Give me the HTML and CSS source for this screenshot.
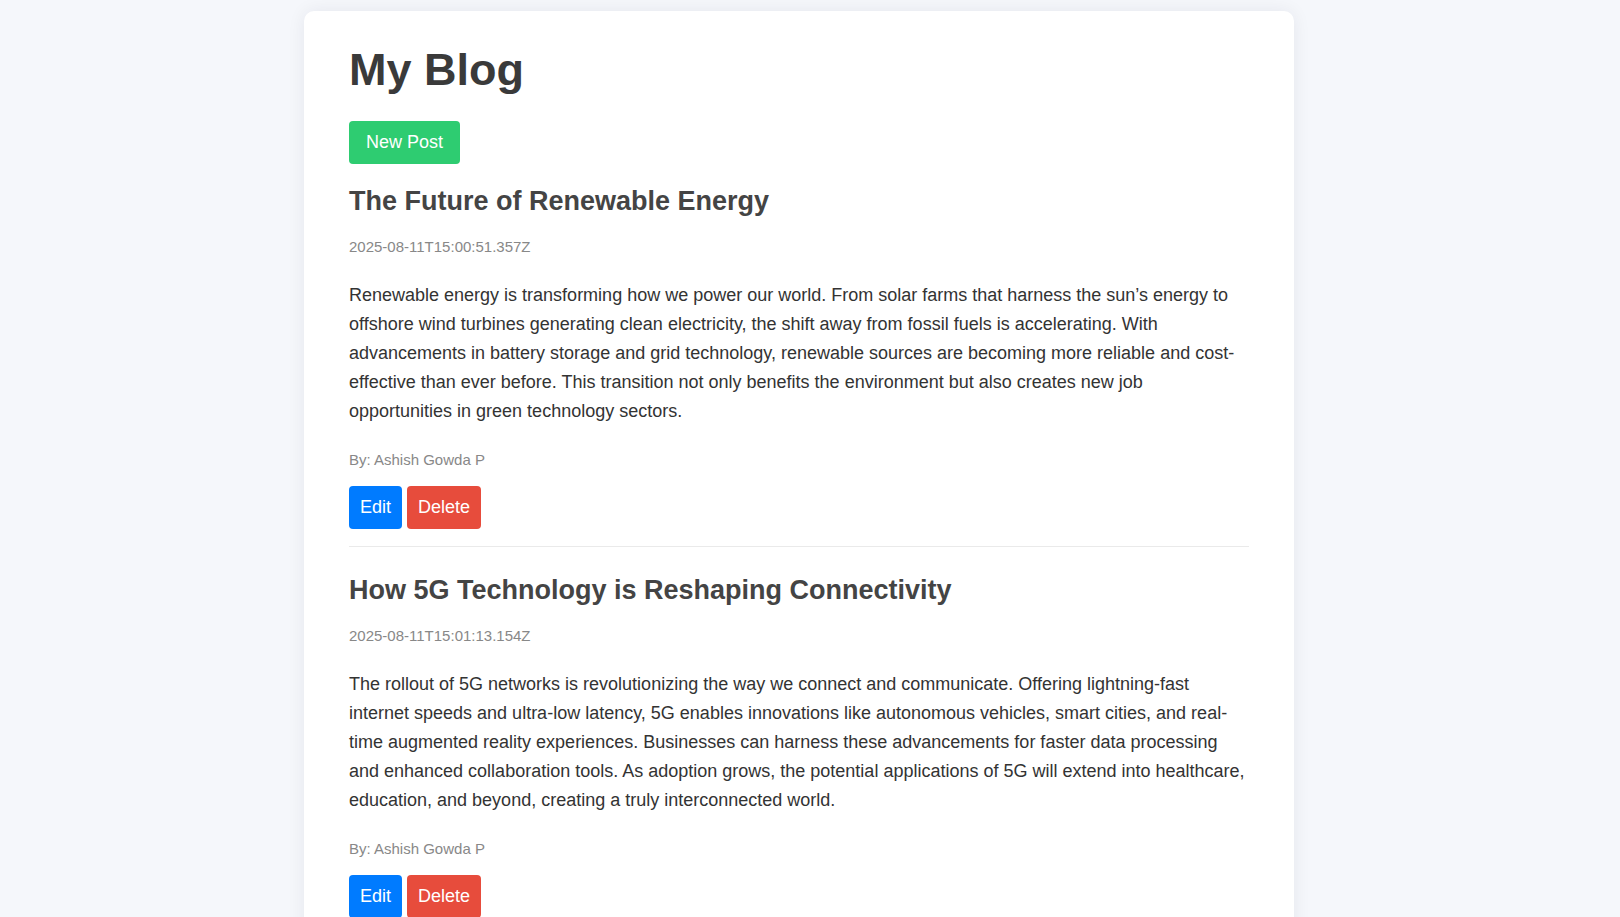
FILE: index.html
```html
<!DOCTYPE html>
<html lang="en">
<head>
<meta charset="utf-8">
<title>My Blog</title>
<link rel="stylesheet" href="styles.css">
</head>
<body>
<main class="container">
  <h1 class="page-title">My Blog</h1>
  <div class="toolbar">
    <button class="btn btn-new">New Post</button>
  </div>

  <article class="post">
    <h2 class="post-title">The Future of Renewable Energy</h2>
    <p class="post-date">2025-08-11T15:00:51.357Z</p>
    <p class="post-content">Renewable energy is transforming how we power our world. From solar farms that harness the sun’s energy to offshore wind turbines generating clean electricity, the shift away from fossil fuels is accelerating. With advancements in battery storage and grid technology, renewable sources are becoming more reliable and cost-effective than ever before. This transition not only benefits the environment but also creates new job opportunities in green technology sectors.</p>
    <p class="post-author">By: Ashish Gowda P</p>
    <div class="post-actions">
      <button class="btn btn-edit">Edit</button>
      <button class="btn btn-delete">Delete</button>
    </div>
  </article>

  <article class="post">
    <h2 class="post-title">How 5G Technology is Reshaping Connectivity</h2>
    <p class="post-date">2025-08-11T15:01:13.154Z</p>
    <p class="post-content">The rollout of 5G networks is revolutionizing the way we connect and communicate. Offering lightning-fast internet speeds and ultra-low latency, 5G enables innovations like autonomous vehicles, smart cities, and real-time augmented reality experiences. Businesses can harness these advancements for faster data processing and enhanced collaboration tools. As adoption grows, the potential applications of 5G will extend into healthcare, education, and beyond, creating a truly interconnected world.</p>
    <p class="post-author">By: Ashish Gowda P</p>
    <div class="post-actions">
      <button class="btn btn-edit">Edit</button>
      <button class="btn btn-delete">Delete</button>
    </div>
  </article>
</main>
</body>
</html>
```

FILE: styles.css
```css
html, body {
  margin: 0;
  padding: 0;
}

body {
  background: #f5f7fb;
  font-family: "Liberation Sans", Arial, sans-serif;
  color: #333;
  padding: 11px 22px 40px 0;
}

.container {
  width: 900px;
  margin: 0 auto;
  background: #ffffff;
  border-radius: 10px;
  box-shadow: 0 0 18px rgba(20, 30, 60, 0.07);
  padding: 33px 45px 30px;
}

.page-title {
  font-size: 45px;
  font-weight: bold;
  color: #3a3a3a;
  margin: 0 0 25px;
  line-height: normal;
}

.toolbar {
  margin-bottom: 22px;
}

.btn {
  font-family: "Liberation Sans", Arial, sans-serif;
  font-size: 18px;
  line-height: 21px;
  color: #ffffff;
  border: none;
  border-radius: 4px;
  padding: 11px 11px;
  cursor: pointer;
  vertical-align: top;
}

.btn-new {
  background: #2ecc71;
  padding: 11px 17px;
}

.btn-edit {
  background: #007bff;
}

.btn-delete {
  background: #e74c3c;
}

.post {
  border-bottom: 1px solid #eaeaea;
  padding-bottom: 17px;
  margin-bottom: 28px;
}

.post-title {
  font-size: 27px;
  font-weight: bold;
  color: #444;
  margin: 0 0 21px;
  line-height: normal;
}

.post-date {
  font-size: 15px;
  color: #888;
  margin: 0 0 26px;
}

.post-content {
  font-size: 18px;
  line-height: 29px;
  color: #333;
  margin: 0 0 25px;
}

.post-author {
  font-size: 15px;
  color: #888;
  margin: 0 0 18px;
}

.post-actions {
  display: flex;
  gap: 5px;
}
```
